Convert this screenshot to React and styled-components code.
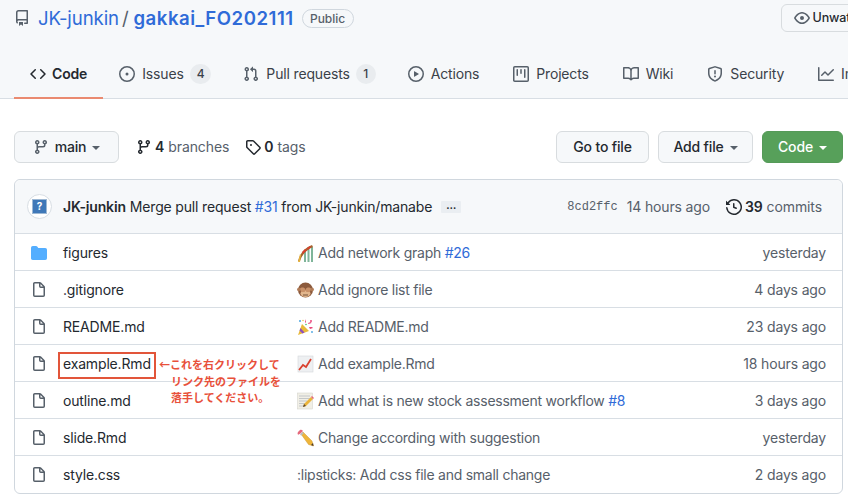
import React from "react";
import styled, { createGlobalStyle } from "styled-components";

const Global = createGlobalStyle`
  html, body { margin: 0; padding: 0; background: #fff; }
  * { box-sizing: border-box; }
`;

const P = {
  repo: "M2 2.5A2.5 2.5 0 014.5 0h8.75a.75.75 0 01.75.75v12.5a.75.75 0 01-.75.75h-2.5a.75.75 0 110-1.5h1.75v-2h-8a1 1 0 00-.714 1.7.75.75 0 01-1.072 1.05A2.495 2.495 0 012 11.5v-9zm10.5-1V9h-8c-.356 0-.694.074-1 .208V2.5a1 1 0 011-1h8zM5 12.25v3.25a.25.25 0 00.4.2l1.45-1.087a.25.25 0 01.3 0L8.6 15.7a.25.25 0 00.4-.2v-3.25a.25.25 0 00-.25-.25h-3.5a.25.25 0 00-.25.25z",
  eye: "M1.679 7.932c.412-.621 1.242-1.75 2.366-2.717C5.175 4.242 6.527 3.5 8 3.5c1.473 0 2.824.742 3.955 1.715 1.124.967 1.954 2.096 2.366 2.717a.119.119 0 010 .136c-.412.621-1.242 1.75-2.366 2.717C10.825 11.758 9.473 12.5 8 12.5c-1.473 0-2.824-.742-3.955-1.715C2.92 9.818 2.09 8.69 1.679 8.068a.119.119 0 010-.136zM8 2c-1.981 0-3.67.992-4.933 2.078C1.797 5.169.88 6.423.43 7.1a1.619 1.619 0 000 1.798c.45.678 1.367 1.932 2.637 3.024C4.329 13.008 6.019 14 8 14c1.981 0 3.67-.992 4.933-2.078 1.27-1.091 2.187-2.345 2.637-3.023a1.619 1.619 0 000-1.798c-.45-.678-1.367-1.932-2.637-3.023C11.671 2.992 9.981 2 8 2zm0 8a2 2 0 100-4 2 2 0 000 4z",
  code: "M4.72 3.22a.75.75 0 011.06 1.06L2.06 8l3.72 3.72a.75.75 0 11-1.06 1.06L.47 8.53a.75.75 0 010-1.06l4.25-4.25zm6.56 0a.75.75 0 10-1.06 1.06L13.94 8l-3.72 3.72a.75.75 0 101.06 1.06l4.25-4.25a.75.75 0 000-1.06l-4.25-4.25z",
  issue: "M8 9.5a1.5 1.5 0 100-3 1.5 1.5 0 000 3zM8 0a8 8 0 100 16A8 8 0 008 0zM1.5 8a6.5 6.5 0 1113 0 6.5 6.5 0 01-13 0z",
  pull: "M7.177 3.073L9.573.677A.25.25 0 0110 .854v4.792a.25.25 0 01-.427.177L7.177 3.427a.25.25 0 010-.354zM3.75 2.5a.75.75 0 100 1.5.75.75 0 000-1.5zm-2.25.75a2.25 2.25 0 113 2.122v5.256a2.251 2.251 0 11-1.5 0V5.372A2.25 2.25 0 011.5 3.25zM11 2.5h-1V4h1a1 1 0 011 1v5.628a2.251 2.251 0 101.5 0V5A2.5 2.5 0 0011 2.5zm1 10.25a.75.75 0 111.5 0 .75.75 0 01-1.5 0zM3.75 12a.75.75 0 100 1.5.75.75 0 000-1.5z",
  play: "M1.5 8a6.5 6.5 0 1113 0 6.5 6.5 0 01-13 0zM8 0a8 8 0 100 16A8 8 0 008 0zM6.379 5.227A.25.25 0 006 5.442v5.117a.25.25 0 00.379.214l4.264-2.559a.25.25 0 000-.428L6.379 5.227z",
  project: "M1.75 0A1.75 1.75 0 000 1.75v12.5C0 15.216.784 16 1.75 16h12.5A1.75 1.75 0 0016 14.25V1.75A1.75 1.75 0 0014.25 0H1.75zM1.5 1.75a.25.25 0 01.25-.25h12.5a.25.25 0 01.25.25v12.5a.25.25 0 01-.25.25H1.75a.25.25 0 01-.25-.25V1.75zM11.75 3a.75.75 0 00-.75.75v7.5a.75.75 0 001.5 0v-7.5a.75.75 0 00-.75-.75zm-8.25.75a.75.75 0 011.5 0v5.5a.75.75 0 01-1.5 0v-5.5zM8 3a.75.75 0 00-.75.75v3.5a.75.75 0 001.5 0v-3.5A.75.75 0 008 3z",
  book: "M0 1.75A.75.75 0 01.75 1h4.253c1.227 0 2.317.59 3 1.501A3.744 3.744 0 0111.006 1h4.245a.75.75 0 01.75.75v10.5a.75.75 0 01-.75.75h-4.507a2.25 2.25 0 00-1.591.659l-.622.621a.75.75 0 01-1.06 0l-.622-.621A2.25 2.25 0 005.258 13H.75a.75.75 0 01-.75-.75V1.75zm8.755 3a2.25 2.25 0 012.25-2.25H14.5v9h-3.757c-.71 0-1.4.201-1.992.572l.004-7.322zm-1.504 7.324l.004-5.073-.002-2.253A2.25 2.25 0 005.003 2.5H1.5v9h3.757a3.75 3.75 0 011.994.574z",
  shield: "M8.533.133a1.75 1.75 0 00-1.066 0l-5.25 1.68A1.75 1.75 0 001 3.48V7c0 1.566.32 3.182 1.303 4.682.983 1.498 2.585 2.813 5.032 3.855a1.7 1.7 0 001.33 0c2.447-1.042 4.049-2.357 5.032-3.855C14.68 10.182 15 8.566 15 7V3.48a1.75 1.75 0 00-1.217-1.667L8.533.133zm-.61 1.429a.25.25 0 01.153 0l5.25 1.68a.25.25 0 01.174.238V7c0 1.358-.275 2.666-1.057 3.86-.784 1.194-2.121 2.34-4.366 3.297a.2.2 0 01-.154 0c-2.245-.956-3.582-2.104-4.366-3.298C2.775 9.666 2.5 8.358 2.5 7V3.48a.25.25 0 01.174-.237l5.25-1.68zM9 10.5a1 1 0 11-2 0 1 1 0 012 0zm-.25-5.75a.75.75 0 10-1.5 0v3a.75.75 0 001.5 0v-3z",
  graph: "M1.5 1.75a.75.75 0 00-1.5 0v12.5c0 .414.336.75.75.75h14.5a.75.75 0 000-1.5H1.5V1.75zm14.28 2.53a.75.75 0 00-1.06-1.06L10 7.94 7.53 5.47a.75.75 0 00-1.06 0L3.22 8.72a.75.75 0 001.06 1.06L7 7.06l2.47 2.47a.75.75 0 001.06 0l5.25-5.25z",
  branch: "M11.75 2.5a.75.75 0 100 1.5.75.75 0 000-1.5zm-2.25.75a2.25 2.25 0 113 2.122V6A2.5 2.5 0 0110 8.5H6a1 1 0 00-1 1v1.128a2.251 2.251 0 11-1.5 0V5.372a2.25 2.25 0 111.5 0v1.836A2.492 2.492 0 016 7h4a1 1 0 001-1v-.628A2.25 2.25 0 019.5 3.25zM4.25 12a.75.75 0 100 1.5.75.75 0 000-1.5zM3.5 3.25a.75.75 0 111.5 0 .75.75 0 01-1.5 0z",
  tag: "M2.5 7.775V2.75a.25.25 0 01.25-.25h5.025a.25.25 0 01.177.073l6.25 6.25a.25.25 0 010 .354l-5.025 5.025a.25.25 0 01-.354 0l-6.25-6.25a.25.25 0 01-.073-.177zm-1.5 0V2.75C1 1.784 1.784 1 2.75 1h5.025c.464 0 .91.184 1.238.513l6.25 6.25a1.75 1.75 0 010 2.474l-5.026 5.026a1.75 1.75 0 01-2.474 0l-6.25-6.25A1.75 1.75 0 011 7.775zM6 5a1 1 0 100 2 1 1 0 000-2z",
  history: "M1.643 3.143L.427 1.927A.25.25 0 000 2.104V5.75c0 .138.112.25.25.25h3.646a.25.25 0 00.177-.427L2.715 4.215a6.5 6.5 0 11-1.18 4.458.75.75 0 10-1.493.154 8.001 8.001 0 101.6-5.684zM7.75 4a.75.75 0 01.75.75v2.992l2.028.812a.75.75 0 01-.557 1.392l-2.5-1A.75.75 0 017 8.25v-3.5A.75.75 0 017.75 4z",
  file: "M3.75 1.5a.25.25 0 00-.25.25v11.5c0 .138.112.25.25.25h8.5a.25.25 0 00.25-.25V6H9.75A1.75 1.75 0 018 4.25V1.5H3.75zm5.75.56v2.19c0 .138.112.25.25.25h2.19L9.5 2.06zM2 1.75C2 .784 2.784 0 3.75 0h5.086c.464 0 .909.184 1.237.513l3.414 3.414c.329.328.513.773.513 1.237v8.086A1.75 1.75 0 0112.25 15h-8.5A1.75 1.75 0 012 13.25V1.75z",
  folder: "M1.75 1A1.75 1.75 0 000 2.75v10.5C0 14.216.784 15 1.75 15h12.5A1.75 1.75 0 0016 13.25v-8.5A1.75 1.75 0 0014.25 3H7.5a.25.25 0 01-.2-.1l-.9-1.2C6.07 1.26 5.55 1 5 1H1.75z",
};

const Svg = styled.svg`
  display: block;
  flex-shrink: 0;
  fill: ${(p) => p.$color || "#57606a"};
`;
const Icon = ({ name, color, size = 16 }) => (
  <Svg $color={color} width={size} height={size} viewBox="0 0 16 16"><path fillRule="evenodd" d={P[name]} /></Svg>
);

const Page = styled.div`
  width: 848px;
  height: 499px;
  overflow: hidden;
  position: relative;
  background: #fff;
  color: #24292f;
  font: 400 14px/20px Inter, "Noto Sans", sans-serif;
  letter-spacing: -0.16px;
`;
const Head = styled.header`
  height: 99px;
  background: #f6f8fa;
  border-bottom: 1px solid #d8dee4;
  display: flex;
  flex-direction: column;
`;
const TitleRow = styled.div`
  height: 36px;
  padding-left: 14px;
  display: flex;
  align-items: center;
  white-space: nowrap;
`;
const Owner = styled.span`
  flex-shrink: 0;
  margin-left: 8px;
  font-size: 18.6px;
  line-height: 24px;
  color: #2f6bd8;
  letter-spacing: -0.1px;
`;
const Slash = styled.span`
  flex-shrink: 0;
  margin: 0 5px 0 3px;
  font-size: 18.6px;
  color: #57606a;
`;
const Repo = styled(Owner)`
  margin-left: 0;
  font-weight: 600;
  letter-spacing: 0.5px;
`;
const Badge = styled.span`
  flex-shrink: 0;
  margin-left: 8px;
  height: 19px;
  width: 52px;
  border: 1px solid #d0d7de;
  border-radius: 10px;
  font-size: 12px;
  line-height: 17px;
  font-weight: 500;
  letter-spacing: 0;
  text-align: center;
  color: #57606a;
`;
const Watch = styled.div`
  margin-left: 427px;
  flex-shrink: 0;
  width: 110px;
  height: 28px;
  margin-top: -1px;
  padding-left: 12px;
  display: flex;
  align-items: center;
  gap: 3px;
  border: 1px solid #d8dcdf;
  border-radius: 6px;
  font-size: 12.5px;
  font-weight: 500;
`;
const Tabs = styled.nav`
  flex: 1;
  padding: 3px 0 0 14px;
  display: flex;
  white-space: nowrap;
`;
const Tab = styled.div`
  flex-shrink: 0;
  height: 60px;
  margin-bottom: -1px;
  padding: 12px ${(p) => (p.$wide ? 18 : 16)}px 0 16px;
  display: flex;
  align-items: center;
  gap: ${(p) => (p.$active ? 6 : 7)}px;
  color: ${(p) => (p.$active ? "#24292f" : "#3a4149")};
  font-weight: ${(p) => (p.$active ? 600 : 400)};
  border-bottom: 2px solid ${(p) => (p.$active ? "#ea8a70" : "transparent")};
`;
const Count = styled.span`
  min-width: 20px;
  height: 20px;
  margin-left: -1px;
  padding: 0 7px;
  border-radius: 10px;
  background: #e9ecef;
  font-size: 12px;
  font-weight: 500;
  text-align: center;
`;
const Main = styled.main`
  padding: 32px 5px 0 14px;
`;
const Bar = styled.div`
  height: 32px;
  display: flex;
  align-items: center;
  margin-bottom: 16px;
`;
const Button = styled.div`
  height: 32px;
  display: flex;
  align-items: center;
  justify-content: center;
  gap: 6px;
  margin-left: ${(p) => p.$ml || 0}px;
  width: ${(p) => p.$w}px;
  border: 1px solid ${(p) => (p.$green ? "#559a58" : "#d8dcdf")};
  border-radius: 6px;
  background: ${(p) => (p.$green ? "#57a05a" : "#f6f8fa")};
  color: ${(p) => (p.$green ? "#fff" : "#24292f")};
  font-weight: 500;
  white-space: nowrap;
`;
const Caret = styled.span`
  width: 0;
  height: 0;
  margin-top: 1px;
  border: 4px solid transparent;
  border-bottom: 0;
  border-top-color: ${(p) => p.$color || "#57606a"};
`;
const Stat = styled.div`
  margin-left: ${(p) => p.$ml}px;
  display: flex;
  align-items: center;
  gap: 3px;
  color: #57606a;
  letter-spacing: -0.1px;
  white-space: nowrap;
`;
const Strong = styled.b`
  margin-right: 1px;
  color: #24292f;
  font-weight: 600;
`;
const Actions = styled.div`
  margin-left: auto;
  display: flex;
`;
const Box = styled.section`
  width: 829px;
  border: 1px solid #d0d7de;
  border-radius: 6px;
`;
const Commit = styled.div`
  height: 54px;
  padding: 0 20px 0 12px;
  display: flex;
  align-items: center;
  background: #f6f8fa;
  border-radius: 6px 6px 0 0;
  border-bottom: 1px solid #d8dee4;
  white-space: nowrap;
`;
const Avatar = styled.div`
  width: 25px;
  height: 25px;
  margin-right: 11px;
  flex-shrink: 0;
  border: 1px solid #d8dee4;
  border-radius: 50%;
  background: #fff;
  display: flex;
  align-items: center;
  justify-content: center;
`;
const AvatarMark = styled.span`
  width: 15px;
  height: 15px;
  background: #3f78b8;
  border: 1px solid #9db8d4;
  color: #fff;
  font-size: 10px;
  line-height: 13px;
  font-weight: 700;
  text-align: center;
`;
const Link = styled.a`
  color: #2f6bd8;
`;
const Author = styled.b`
  font-weight: 600;
  margin-right: 4px;
`;
const CommitText = styled.span`
  letter-spacing: -0.17px;
`;
const Ellipsis = styled.span`
  width: 20px;
  height: 12px;
  margin-left: 9px;
  border-radius: 1px;
  background: #eaeef2;
  font-size: 10px;
  font-weight: 700;
  line-height: 8px;
  text-align: center;
`;
const Hash = styled.span`
  margin-left: auto;
  font: 12px/20px "Liberation Mono", monospace;
  letter-spacing: 0;
  color: #57606a;
`;
const Ago = styled.span`
  margin-left: 9px;
  color: #57606a;
`;
const Row = styled.div`
  height: 37px;
  padding: 2px 16px 0;
  display: grid;
  grid-template-columns: 16px 218px 1fr auto;
  column-gap: 16px;
  align-items: center;
  border-bottom: 1px solid #d8dee4;
  white-space: nowrap;
  &:last-child { border-bottom: 0; padding-top: 1px; }
`;
const Message = styled.div`
  display: flex;
  align-items: center;
  gap: 4px;
  color: #57606a;
  letter-spacing: -0.25px;
`;
const Age = styled.span`
  color: #57606a;
`;
const Marker = styled.div`
  position: absolute;
  left: 58px;
  top: 352px;
  width: 98px;
  height: 27px;
  border: 2px solid #e2553a;
`;
const Note = styled.div`
  position: absolute;
  left: 159px;
  top: 356px;
  color: #e8503a;
  font: 700 11px/16.7px "Noto Sans CJK JP", sans-serif;
  letter-spacing: 0;
  white-space: nowrap;
`;
const NoteLine = styled.div`
  padding-left: ${(p) => p.$indent || 0}px;
`;

const Emoji = ({ children }) => <Svg width="17" height="18" viewBox="0 0 17 18">{children}</Svg>;
const Coaster = () => (
  <Emoji>
    <path d="M7 6h2v12H7zM10.500 4h2v14h-2zM14 3h2v15h-2z" fill="#7fb59a" />
    <path d="M1 17C3 10 7 4 15 1l1 2C9 6 5 11 3 17z" fill="#a5652f" />
    <path d="M5 8l3-3 2 1-4 4zM10 4l3-2 1 1-3 3z" fill="#d6402f" />
    <path d="M1 18l2-8 1 1-1 7z" fill="#e4b23e" />
  </Emoji>
);
const Monkey = () => (
  <Emoji>
    <circle cx="8.500" cy="9" r="7.500" fill="#8c5a3c" />
    <circle cx="1.800" cy="8.500" r="1.800" fill="#b07b57" />
    <circle cx="15.200" cy="8.500" r="1.800" fill="#b07b57" />
    <ellipse cx="8.500" cy="12.500" rx="5" ry="3.500" fill="#e2b68d" />
    <path d="M3 7.500c1-1.500 4-1.500 5 0l.5 2-1 1.500H4zM14 7.500c-1-1.500-4-1.500-5 0l-.5 2 1 1.500H13z" fill="#c99169" />
    <path d="M6 14h5" stroke="#5c3a26" strokeWidth=".8" />
  </Emoji>
);
const Popper = () => (
  <Emoji>
    <path d="M1 17L5 6l7 7z" fill="#e8b93a" />
    <path d="M3.500 10l4 4.500-2 1-3-3zM1.500 15.500l1 1" fill="#8d4fbf" />
    <circle cx="3" cy="3" r="1" fill="#4aa5e0" />
    <circle cx="14" cy="3" r="1" fill="#e8457a" />
    <path d="M8 1l1 3-1 1zM11 5l3-1 .5 1-3 1zM12 9l3 0 1 1-3 1z" fill="#e8457a" />
    <circle cx="9" cy="6.500" r=".8" fill="#4fbf6a" />
    <circle cx="15" cy="14" r=".9" fill="#4aa5e0" />
    <circle cx="6" cy="2.500" r=".7" fill="#e8b93a" />
  </Emoji>
);
const Chart = () => (
  <Emoji>
    <rect x="1" y="1" width="15" height="16" fill="#eef0f2" stroke="#d3d7da" strokeWidth=".6" />
    <path d="M2 15l4-5 3 2 5-8" fill="none" stroke="#d9412f" strokeWidth="1.800" />
  </Emoji>
);
const Memo = () => (
  <Emoji>
    <rect x="0.500" y="1" width="15" height="16" fill="#f1efe6" stroke="#cfcfc8" strokeWidth=".5" />
    <path d="M2 4h11M2 6.500h11M2 9h8M2 11.500h6M2 14h5" stroke="#b9bcc2" strokeWidth=".8" />
    <path d="M6 15l1-3 7-7 2 2-7 7z" fill="#eab33b" />
    <path d="M14 5l1-1 2 2-1 1z" fill="#e5677a" />
    <path d="M6 15l1-3 2 2z" fill="#5a4632" />
  </Emoji>
);
const Pencil = () => (
  <Emoji>
    <path d="M4 5L6 3l9 9 1.500 5-5-1.500z" fill="#eeb53a" stroke="#c58a20" strokeWidth=".4" />
    <path d="M1 3l2-2c1-.6 2-.3 3 1L3.500 4.500 1.200 5.800C.4 5 .4 4 1 3z" fill="#e5697c" />
    <path d="M3 5.500L5.500 3l1.200 1.200-2.500 2.500z" fill="#b9bdc2" />
    <path d="M14 16l2-2 .5 3z" fill="#4a3a2c" />
  </Emoji>
);

const rows = [
  { icon: "folder", name: "figures", emoji: <Coaster />, msg: "Add network graph", ref: "#26", age: "yesterday" },
  { icon: "file", name: ".gitignore", emoji: <Monkey />, msg: "Add ignore list file", age: "4 days ago" },
  { icon: "file", name: "README.md", emoji: <Popper />, msg: "Add README.md", age: "23 days ago" },
  { icon: "file", name: "example.Rmd", emoji: <Chart />, msg: "Add example.Rmd", age: "18 hours ago" },
  { icon: "file", name: "outline.md", emoji: <Memo />, msg: "Add what is new stock assessment workflow", ref: "#8", age: "3 days ago" },
  { icon: "file", name: "slide.Rmd", emoji: <Pencil />, msg: "Change according with suggestion", age: "yesterday" },
  { icon: "file", name: "style.css", msg: ":lipsticks: Add css file and small change", age: "2 days ago" },
];

export default function App() {
  return (
    <Page>
      <Global />
      <Head>
        <TitleRow>
          <Icon name="repo" />
          <Owner>JK-junkin</Owner>
          <Slash>/</Slash>
          <Repo>gakkai_FO202111</Repo>
          <Badge>Public</Badge>
          <Watch><Icon name="eye" /> Unwatch</Watch>
        </TitleRow>
        <Tabs>
          <Tab $active><Icon name="code" color="#24292f" />Code</Tab>
          <Tab><Icon name="issue" />Issues<Count>4</Count></Tab>
          <Tab><Icon name="pull" />Pull requests<Count>1</Count></Tab>
          <Tab $wide><Icon name="play" />Actions</Tab>
          <Tab $wide><Icon name="project" />Projects</Tab>
          <Tab $wide><Icon name="book" />Wiki</Tab>
          <Tab $wide><Icon name="shield" />Security</Tab>
          <Tab><Icon name="graph" />Insights</Tab>
        </Tabs>
      </Head>
      <Main>
        <Bar>
          <Button $w={105}><Icon name="branch" /><span>main</span><Caret /></Button>
          <Stat $ml={17}><Icon name="branch" color="#24292f" /><Strong>4</Strong> branches</Stat>
          <Stat $ml={16}><Icon name="tag" color="#24292f" /><Strong>0</Strong> tags</Stat>
          <Actions>
            <Button $w={93}>Go to file</Button>
            <Button $w={95} $ml={9}>Add file<Caret /></Button>
            <Button $w={81} $ml={9} $green>Code<Caret $color="#fff" /></Button>
          </Actions>
        </Bar>
        <Box>
          <Commit>
            <Avatar><AvatarMark>?</AvatarMark></Avatar>
            <Author>JK-junkin</Author>
            <CommitText>Merge pull request <Link>#31</Link> from JK-junkin/manabe</CommitText>
            <Ellipsis>…</Ellipsis>
            <Hash>8cd2ffc</Hash>
            <Ago>14 hours ago</Ago>
            <Stat $ml={16}><Icon name="history" color="#24292f" /><Strong>39</Strong> commits</Stat>
          </Commit>
          {rows.map((r) => (
            <Row key={r.name}>
              <Icon name={r.icon} color={r.icon === "folder" ? "#54aeff" : "#57606a"} />
              <span>{r.name}</span>
              <Message>
                {r.emoji}
                <span>{r.msg}{r.ref && <> <Link>{r.ref}</Link></>}</span>
              </Message>
              <Age>{r.age}</Age>
            </Row>
          ))}
        </Box>
      </Main>
      <Marker />
      <Note>
        <NoteLine>←これを右クリックして</NoteLine>
        <NoteLine $indent={12}>リンク先のファイルを</NoteLine>
        <NoteLine $indent={12}>落手してください。</NoteLine>
      </Note>
    </Page>
  );
}
